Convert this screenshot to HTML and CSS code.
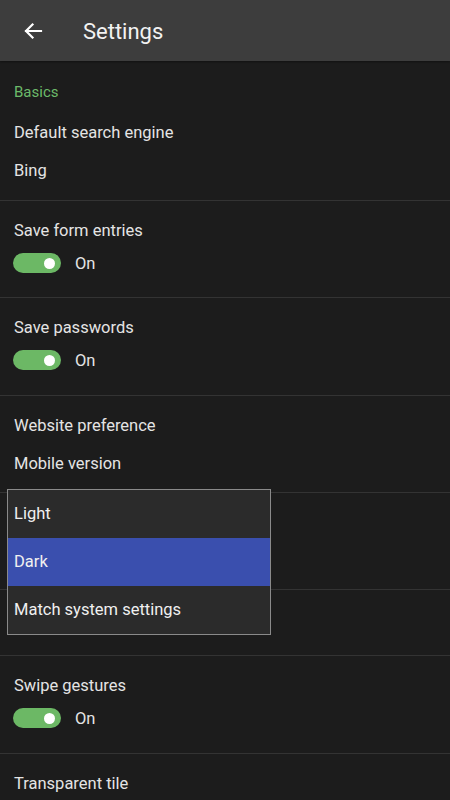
FILE: index.html
```html
<!DOCTYPE html>
<html lang="en">
<head>
    <meta charset="UTF-8">
    <meta name="viewport" content="width=device-width, initial-scale=1.0">
    <title>Settings</title>
    <link rel="stylesheet" href="styles.css">
</head>
<body>
    <!-- Title bar -->
    <header class="app-bar">
        <button class="back-btn" aria-label="Back">
            <svg width="20" height="18" viewBox="0 0 20 18">
                <path d="M18 9H3M9.5 2.5L3 9l6.5 6.5" fill="none" stroke="#fff" stroke-width="2.2" stroke-linecap="square"/>
            </svg>
        </button>
        <h1>Settings</h1>
    </header>

    <main class="settings">
        <section class="group group-first">
            <h2 class="group-title">Basics</h2>
            <p class="label label-link">Default search engine</p>
            <p class="value">Bing</p>
        </section>

        <section class="group">
            <p class="label">Save form entries</p>
            <div class="switch-row">
                <span class="switch on"><span class="knob"></span></span>
                <span class="state">On</span>
            </div>
        </section>

        <section class="group group-tall">
            <p class="label">Save passwords</p>
            <div class="switch-row">
                <span class="switch on"><span class="knob"></span></span>
                <span class="state">On</span>
            </div>
        </section>

        <section class="group">
            <p class="label">Website preference</p>
            <p class="value">Mobile version</p>
        </section>

        <!-- App theme row, covered by the open picker -->
        <section class="group has-menu">
            <ul class="menu">
                <li>Light</li>
                <li class="selected">Dark</li>
                <li>Match system settings</li>
            </ul>
        </section>

        <section class="group group-short"></section>

        <section class="group group-tall">
            <p class="label">Swipe gestures</p>
            <div class="switch-row">
                <span class="switch on"><span class="knob"></span></span>
                <span class="state">On</span>
            </div>
        </section>

        <section class="group group-last">
            <p class="label">Transparent tile</p>
        </section>
    </main>
</body>
</html>
```

FILE: styles.css
```css
/* General Styles */
body {
    font-family: Roboto, "Noto Sans", sans-serif;
    background-color: #1c1c1c;
    color: #e4e4e4;
    margin: 0;
    padding: 0;
}

p, h1, h2, ul {
    margin: 0;
    padding: 0;
}

/* Title bar */
.app-bar {
    height: 61px;
    background: #3d3d3d;
    display: flex;
    align-items: center;
    box-shadow: 0 1px 2px rgba(0, 0, 0, 0.4);
}

.back-btn {
    background: none;
    border: none;
    padding: 0;
    margin: 1px 0 0 23px;
    width: 20px;
    height: 18px;
    display: flex;
    cursor: pointer;
}

.app-bar h1 {
    font-size: 22px;
    font-weight: 400;
    color: #f2f2f2;
    margin-left: 40px;
    margin-top: 2px;
}

/* Settings list */
.group {
    padding: 18px 14px 0;
    height: 97px;
    border-bottom: 1px solid #333;
    box-sizing: border-box;
}

.group-first {
    padding-top: 19px;
    height: 140px;
}

.group-tall {
    height: 98px;
}

.group-short {
    height: 66px;
}

.group-last {
    height: 80px;
    border-bottom: none;
}

.group-title {
    font-size: 15px;
    font-weight: 400;
    color: #6cba6a;
    line-height: 24px;
}

.label {
    font-size: 16.5px;
    line-height: 24px;
    color: #e4e4e4;
}

.label-link {
    margin-top: 17px;
}

.value {
    font-size: 16.5px;
    line-height: 24px;
    margin-top: 14px;
    color: #e4e4e4;
}

/* Toggle switch */
.switch-row {
    display: flex;
    align-items: center;
    margin-top: 8px;
    height: 24px;
}

.switch {
    width: 48px;
    height: 20px;
    border-radius: 10px;
    background: #6cb865;
    margin-left: -1px;
    display: flex;
    align-items: center;
    justify-content: flex-end;
    padding-right: 6px;
    box-sizing: border-box;
}

.switch .knob {
    width: 11px;
    height: 11px;
    border-radius: 50%;
    background: #fff;
}

.state {
    font-size: 16.5px;
    margin-left: 14px;
    color: #e4e4e4;
}

/* Dropdown menu */
.has-menu {
    position: relative;
}

.menu {
    list-style: none;
    position: absolute;
    left: 7px;
    top: -4px;
    width: 262px;
    background: #2b2b2b;
    border: 1px solid #8a8a8a;
    z-index: 2;
}

.menu li {
    height: 48px;
    line-height: 48px;
    padding-left: 6px;
    font-size: 16.5px;
    color: #f0f0f0;
}

.menu li.selected {
    background: #3a4fae;
}
```
